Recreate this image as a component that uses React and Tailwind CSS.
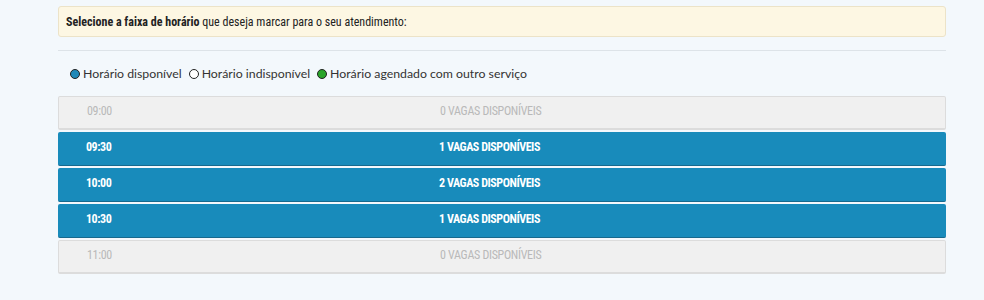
const slots = [
  { hora: "09:00", vagas: 0 },
  { hora: "09:30", vagas: 1 },
  { hora: "10:00", vagas: 2 },
  { hora: "10:30", vagas: 1 },
  { hora: "11:00", vagas: 0 },
];

const condensed = {
  fontFamily: '"Roboto Condensed", "Liberation Sans Narrow", "DejaVu Sans Condensed", sans-serif',
};

function Legend({ color, label }) {
  return (
    <span className="flex items-center gap-[3px]">
      <span className={`inline-block w-[10px] h-[10px] rounded-full border border-[#222] ${color}`} />
      <span>{label}</span>
    </span>
  );
}

export default function App() {
  return (
    <div className="w-[984px] h-[300px] bg-[#f3f8fc] overflow-hidden">
      <div className="ml-[58px] w-[888px] pt-[6px]">
        <div
          className="h-[31px] flex items-center px-[7px] bg-[#fdf7e3] border border-[#ece3c8] rounded-[3px] text-[12px] text-[#222]"
          style={condensed}
        >
          <span className="font-bold">Selecione a faixa de horário</span>
          <span>&nbsp;que deseja marcar para o seu atendimento:</span>
        </div>

        <hr className="mt-[13px] border-t border-[#dde3e8]" />

        <div
          className="flex items-center gap-[7px] h-[22px] mt-[12px] ml-[12px] text-[12.3px] text-[#333]"
          style={{ fontFamily: '"Source Sans Pro", Lato, "Noto Sans", sans-serif' }}
        >
          <Legend color="bg-[#1e88b8]" label="Horário disponível" />
          <Legend color="bg-white" label="Horário indisponível" />
          <Legend color="bg-[#2aa52a]" label="Horário agendado com outro serviço" />
        </div>

        <div className="flex flex-col gap-[2px] mt-[11px]" style={condensed}>
          {slots.map((s) => {
            const livre = s.vagas > 0;
            return (
              <div
                key={s.hora}
                className={
                  livre
                    ? "h-[34px] pb-[3px] grid grid-cols-[381px_1fr] items-center rounded-[2px] bg-[#188bbb] border-b border-[#17698d] text-white text-[12px] tracking-[-0.45px] font-bold"
                    : "h-[34px] pb-[3px] grid grid-cols-[381px_1fr] items-center rounded-[2px] bg-[#f0f0f0] border border-[#dcdcdc] border-b-2 text-[#b9b9b9] text-[12px] tracking-[-0.3px]"
                }
              >
                <span className="pl-[28px]">{s.hora}</span>
                <span>{s.vagas} VAGAS DISPONÍVEIS</span>
              </div>
            );
          })}
        </div>
      </div>
    </div>
  );
}
